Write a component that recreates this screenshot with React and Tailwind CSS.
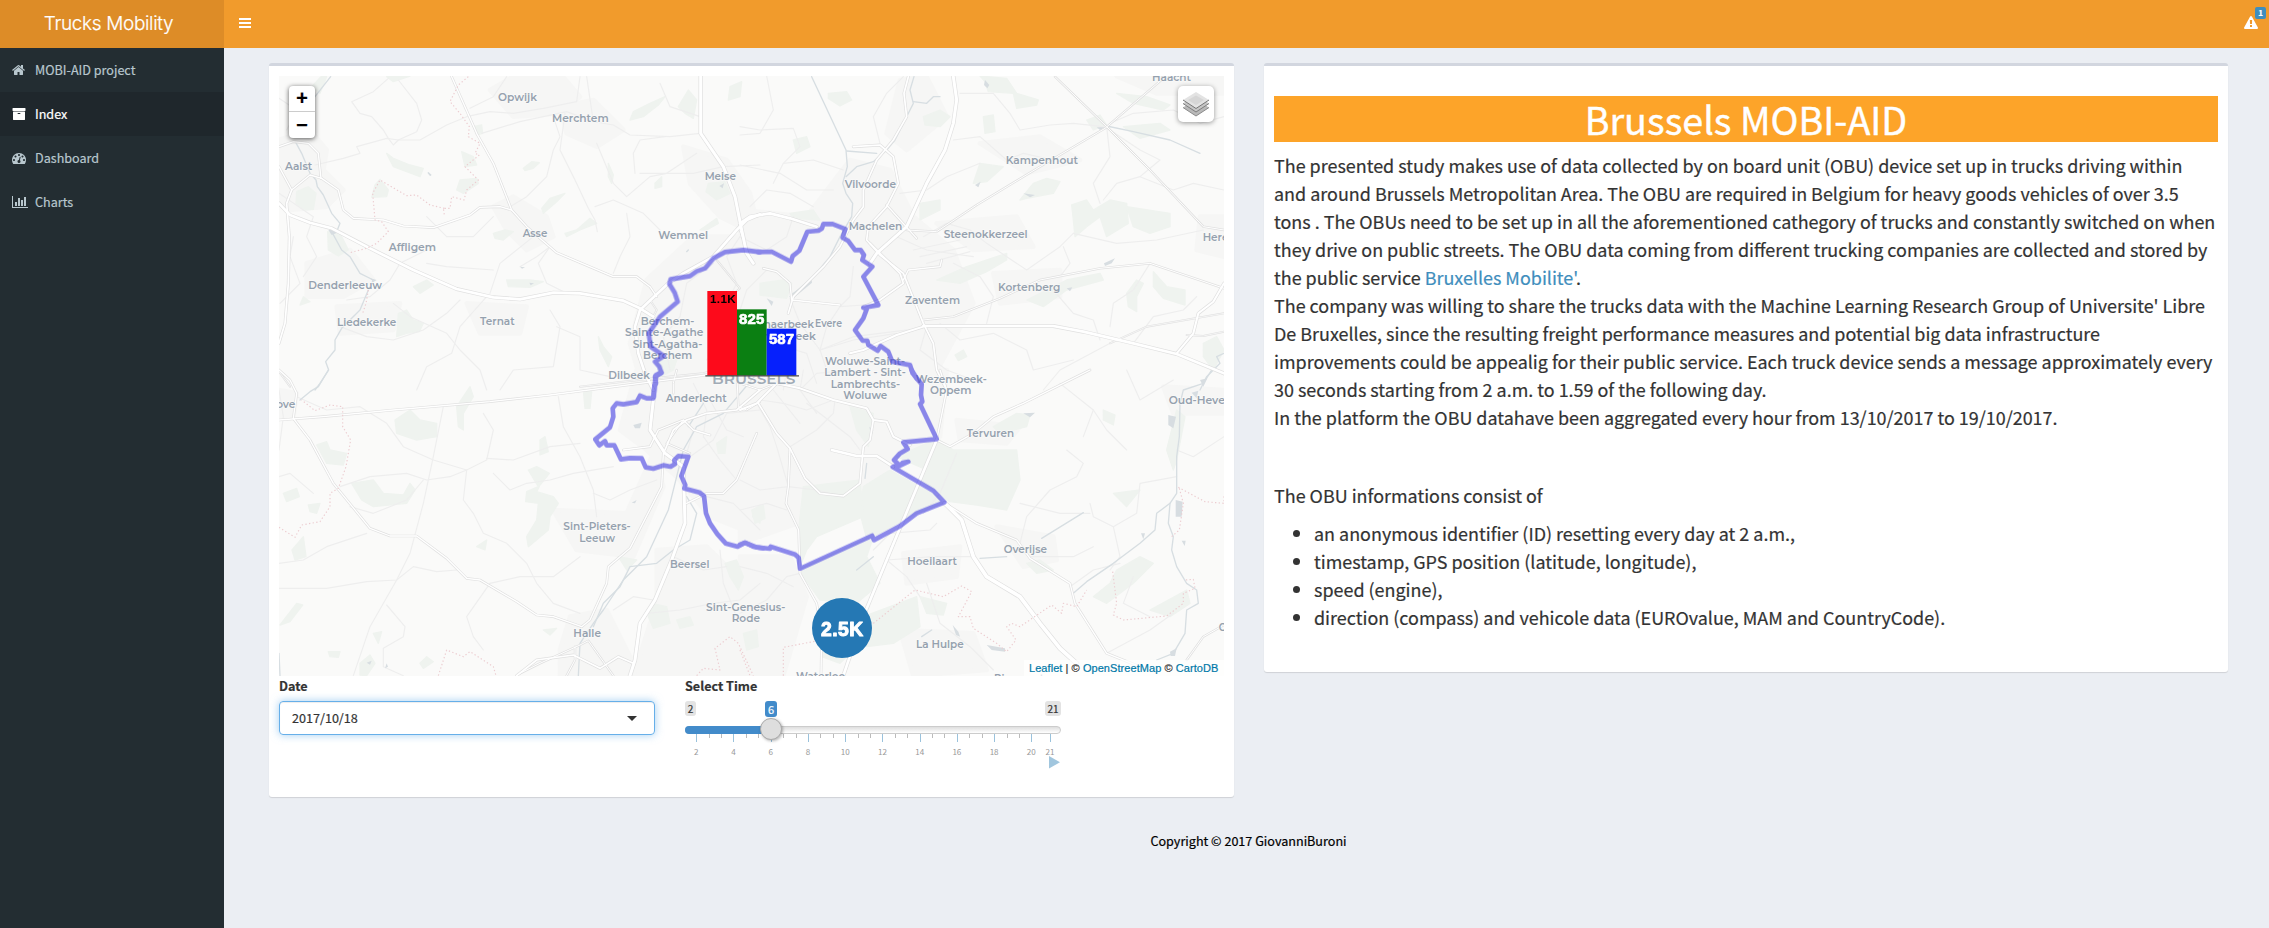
const FA = {
  home: "M1408 992v480q0 26-19 45t-45 19h-384v-384h-256v384h-384q-26 0-45-19t-19-45v-480q0-1 .5-3t.5-3l575-474 575 474q1 2 1 6zm223-69l-62 74q-8 9-21 11h-3q-13 0-21-7l-692-577-692 577q-12 8-24 7-13-2-21-11l-62-74q-8-10-7-23.5t11-21.5l719-599q32-26 76-26t76 26l244 204v-195q0-14 9-23t23-9h192q14 0 23 9t9 23v408l219 182q10 8 11 21.5t-7 23.5z",
  archive: "M1088 832q0-26-19-45t-45-19h-256q-26 0-45 19t-19 45 19 45 45 19h256q26 0 45-19t19-45zm576-192v960q0 26-19 45t-45 19h-1408q-26 0-45-19t-19-45v-960q0-26 19-45t45-19h1408q26 0 45 19t19 45zm64-448v256q0 26-19 45t-45 19h-1536q-26 0-45-19t-19-45v-256q0-26 19-45t45-19h1536q26 0 45 19t19 45z",
  dashboard: "M384 1152q0-53-37.5-90.5t-90.5-37.5-90.5 37.5-37.5 90.5 37.5 90.5 90.5 37.5 90.5-37.5 37.5-90.5zm192-448q0-53-37.5-90.5t-90.5-37.5-90.5 37.5-37.5 90.5 37.5 90.5 90.5 37.5 90.5-37.5 37.5-90.5zm428 481l101-382q6-26-7.5-48.5t-38.5-29.5-48 6.5-30 39.5l-101 382q-60 5-107 43.5t-63 98.5q-20 77 20 146t117 89 146-20 89-117q16-60-6-117t-72-91zm660-33q0-53-37.5-90.5t-90.5-37.5-90.5 37.5-37.5 90.5 37.5 90.5 90.5 37.5 90.5-37.5 37.5-90.5zm-640-640q0-53-37.5-90.5t-90.5-37.5-90.5 37.5-37.5 90.5 37.5 90.5 90.5 37.5 90.5-37.5 37.5-90.5zm448 192q0-53-37.5-90.5t-90.5-37.5-90.5 37.5-37.5 90.5 37.5 90.5 90.5 37.5 90.5-37.5 37.5-90.5zm320 448q0 261-141 483-19 29-54 29h-1402q-35 0-54-29-141-221-141-483 0-182 71-348t191-286 286-191 348-71 348 71 286 191 191 286 71 348z",
  chart: "M640 896v512h-256v-512h256zm384-512v1024h-256v-1024h256zm1024 1152v128h-2048v-1536h128v1408h1920zm-640-896v768h-256v-768h256zm384-384v1152h-256v-1152h256z",
  warning: "M1024 1375v-190q0-14-9.5-23.5t-22.5-9.5h-192q-13 0-22.5 9.5t-9.5 23.5v190q0 14 9.5 23.5t22.5 9.5h192q13 0 22.5-9.5t9.5-23.5zm-2-374l18-459q0-12-10-19-13-11-24-11h-220q-11 0-24 11-10 7-10 21l17 457q0 10 10 16.5t24 6.5h185q14 0 23.5-6.5t10.5-16.5zm-14-934l768 1408q35 63-2 126-17 29-46.5 46t-63.5 17h-1536q-34 0-63.5-17t-46.5-46q-37-63-2-126l768-1408q17-31 47-49t65-18 65 18 47 49z",
};

const MENU = [
  { label: "MOBI-AID project", icon: "home" },
  { label: "Index", icon: "archive", active: true },
  { label: "Dashboard", icon: "dashboard" },
  { label: "Charts", icon: "chart" },
];

function Icon({ name, className }) {
  return (
    <svg viewBox={name === "chart" ? "0 0 2048 1792" : "0 0 1792 1792"} className={className} fill="currentColor">
      <path d={FA[name]} />
    </svg>
  );
}

// Map geometry is stored per quadrant: north-west, north-east, south-west, south-east.
const ORIGIN = { nw: "translate(0 0)", ne: "translate(1440 0)", sw: "translate(0 960)", se: "translate(1440 960)" };

const URBAN = {
  nw: ["M57 270 L150 240 L200 300 L190 360 L250 420 L200 470 L90 480 L57 440Z", "M690 120 L760 80 L900 70 L960 140 L900 190 L760 200Z", "M900 170 L1000 150 L1090 240 L1010 290 L920 250Z", "M700 470 L760 440 L860 500 L880 560 L800 600 L740 540Z", "M140 640 L270 600 L340 690 L250 740 L140 740Z", "M1270 290 L1400 330 L1470 430 L1500 560 L1380 500 L1290 400Z", "M1160 690 L1300 560 L1500 560 L1500 1020 L1150 1020 L1110 880Z", "M620 760 L800 770 L780 850 L660 850Z", "M230 770 L420 760 L400 840 L240 850Z"],
  ne: ["M0 480 L200 500 L330 330 L450 360 L520 500 L640 600 L700 760 L560 1020 L0 1020Z", "M480 90 L560 80 L620 200 L500 300 L440 250Z", "M1130 78 L1452 78 L1452 130 L1250 130Z", "M720 280 L900 260 L1020 330 L860 370Z", "M760 670 L960 660 L960 740 L780 760Z", "M1380 500 L1452 500 L1452 620 L1370 600Z", "M590 520 L830 500 L880 590 L700 600Z"],
  sw: ["M1130 0 L1500 0 L1500 500 L1350 440 L1250 320 L1160 240 L1080 180Z", "M880 420 L1100 430 L1180 250 L1210 350 L1120 560 L950 540Z", "M930 740 L1040 720 L1120 880 L1110 917 L900 917 L900 840Z", "M1190 540 L1340 530 L1500 690 L1500 917 L1120 917 L1190 700Z", "M57 60 L110 70 L100 140 L57 140Z"],
  se: ["M0 0 L620 0 L600 200 L470 250 L370 400 L230 440 L0 520Z", "M490 550 L660 530 L650 620 L500 640Z", "M650 150 L840 170 L800 220 L660 210Z", "M0 560 L150 560 L200 680 L130 917 L0 917Z", "M770 470 L940 500 L950 570 L850 590Z", "M480 780 L700 790 L740 900 L520 917Z", "M1270 50 L1452 60 L1452 130 L1300 130Z"],
};

const GREEN = {
  nw: ["M110 425 L145 410 L168 430 L160 478 L130 480 L108 460Z", "M203 545 L240 550 L265 600 L235 618 L205 600Z", "M360 388 L385 420 L380 440 L335 442 L345 405Z", "M600 390 L650 385 L655 400 L610 430 L590 420Z", "M605 305 L640 320 L650 345 L615 350Z", "M380 310 L400 325 L450 345 L490 355 L480 380 L440 365 L400 350Z", "M415 790 L440 780 L460 810 L490 820 L478 845 L440 850 L410 860Z", "M700 550 L735 540 L760 545 L730 570 L705 565Z", "M845 475 L870 445 L915 430 L890 455 L850 490Z", "M915 550 L950 540 L990 505 L1010 520 L960 540 L920 560Z", "M790 355 L815 335 L838 338 L820 355 L795 362Z", "M1120 185 L1170 160 L1215 140 L1195 165 L1150 200 L1110 210Z", "M1255 170 L1285 120 L1310 150 L1300 205 L1275 190Z", "M1345 400 L1395 395 L1410 430 L1370 450 L1338 425Z", "M1320 540 L1370 505 L1375 520 L1340 540Z", "M740 690 L810 690 L850 695 L810 712 L745 710Z", "M460 710 L500 690 L520 705 L480 730Z", "M1045 340 L1060 375 L1055 400 L1045 380Z", "M1015 860 L1030 890 L1055 920 L1045 950 L1020 900Z", "M1190 920 L1250 930 L1240 960 L1195 985Z", "M640 230 L665 225 L668 250 L650 255Z", "M1410 110 L1445 95 L1440 140 L1405 150Z", "M155 110 L185 78 L200 80 L180 130Z", "M1185 400 L1205 380 L1205 410 L1185 415Z", "M380 80 L450 78 L400 95Z", "M130 740 L150 755 L120 765Z"],
  ne: ["M720 78 L800 85 L830 130 L895 150 L890 165 L830 175 L820 130 L745 125 L735 95Z", "M265 130 L320 125 L335 150 L300 168 L265 145Z", "M550 200 L600 180 L630 200 L600 230 L555 225Z", "M995 465 L1040 450 L1060 480 L1110 450 L1160 460 L1165 520 L1100 560 L1080 500 L1040 530 L1005 560 L1000 510Z", "M1160 470 L1290 490 L1290 530 L1230 550 L1180 530Z", "M840 450 L880 400 L920 385 L960 395 L940 430 L860 445Z", "M540 460 L600 450 L600 480 L540 510Z", "M590 690 L680 650 L800 610 L800 630 L740 665 L660 700Z", "M60 700 L130 690 L155 700 L140 745 L60 735Z", "M160 270 L200 260 L210 290 L170 310Z", "M860 750 L980 690 L1080 670 L1090 690 L980 720 L910 770Z", "M1240 665 L1280 710 L1335 720 L1335 765 L1270 745 L1240 710Z", "M1160 730 L1190 690 L1210 700 L1190 740 L1190 785 L1165 770Z", "M1150 230 L1260 220 L1290 240 L1200 265Z", "M1040 210 L1080 195 L1100 225 L1060 240Z", "M1130 130 L1220 140 L1290 165 L1270 180 L1180 160Z", "M150 490 L220 480 L240 510 L160 505Z", "M1390 880 L1430 860 L1452 900 L1420 960 L1390 920Z", "M720 340 L790 350 L740 395 L700 400Z", "M645 915 L670 900 L680 920 L655 932Z", "M730 200 L760 195 L765 245 L735 250Z"],
  sw: ["M805 300 L830 290 L868 310 L840 345 L830 365 L880 380 L895 400 L870 440 L865 480 L805 530 L800 500 L830 450 L835 400 L797 395 L800 365 L835 350Z", "M170 225 L200 215 L210 240 L260 250 L250 285 L200 280Z", "M405 150 L450 120 L480 150 L530 160 L530 200 L470 210 L410 190Z", "M590 110 L630 50 L640 80 L610 130 L610 180 L595 170Z", "M275 340 L340 330 L370 370 L430 375 L450 340 L465 360 L440 400 L340 410 L305 390Z", "M70 370 L110 355 L118 380 L80 395Z", "M145 405 L180 400 L170 430 L150 425Z", "M96 540 L130 500 L138 560 L105 570Z", "M60 765 L110 700 L128 705 L90 755Z", "M300 880 L330 855 L345 880 L320 917 L300 915Z", "M340 790 L365 785 L355 820Z", "M480 880 L500 860 L520 875 L490 895Z", "M970 60 L995 65 L990 115 L975 115Z", "M840 210 L855 200 L865 245 L840 255Z", "M1370 220 L1400 200 L1395 250 L1375 250Z", "M1480 420 L1500 405 L1500 460 L1478 440Z", "M1395 580 L1430 570 L1450 620 L1435 660 L1410 620Z", "M1175 700 L1220 710 L1230 760 L1180 775 L1165 740Z", "M1250 750 L1290 740 L1300 765 L1260 775Z", "M1450 790 L1490 780 L1495 830 L1460 840Z", "M650 530 L680 510 L675 540Z", "M205 845 L240 845 L235 862 L210 860Z", "M850 780 L890 775 L870 795Z", "M1075 560 L1130 570 L1100 600Z"],
  se: ["M370 350 L450 300 L520 340 L580 370 L610 400 L530 430 L400 500 L380 560 L420 640 L350 700 L240 690 L190 620 L180 596 L380 505 L360 430Z", "M590 205 L640 240 L830 240 L840 330 L800 420 L710 405 L630 395 L580 360 L540 330Z", "M190 350 L360 330 L370 440 L230 500 L200 540 L180 590 L176 480Z", "M760 170 L830 130 L870 135 L860 170 L780 190Z", "M35 420 L70 405 L75 445 L45 460Z", "M370 740 L530 680 L540 770 L460 820 L380 830Z", "M540 680 L620 700 L610 735 L560 730Z", "M1060 680 L1110 640 L1130 600 L1200 560 L1240 580 L1180 640 L1100 700Z", "M1230 720 L1340 660 L1350 700 L1290 740Z", "M1280 240 L1310 120 L1335 140 L1310 270 L1300 300Z", "M860 580 L900 570 L940 600 L890 610Z", "M1120 370 L1200 360 L1160 410Z", "M240 830 L330 850 L300 880 L245 860Z", "M330 110 L400 130 L385 230 L350 180Z", "M470 260 L560 220 L600 210 L560 300Z", "M1090 120 L1125 135 L1120 165 L1090 150Z"],
};

const WATER_LINES = {
  nw: ["M212 80 L165 140", "M106 275 L125 310 L150 370 L168 390 L172 410 L190 435 L215 490 L240 520 L232 540 L215 545", "M215 545 L245 600 L270 620 L300 670 L340 690 L325 720 L300 780 L245 835 L225 870 L225 900 L197 935 L206 960 L180 1000 L165 1020", "M505 368 L512 375", "M1280 605 L1285 600"],
  ne: ["M215 80 L318 300 L322 350 L308 400 L318 430 L338 460 L335 500 L300 560 L270 620 L220 680 L150 740", "M522 80 L510 120 L520 160 L495 210 L465 270 L440 300 L400 335 L350 350 L318 380", "M320 303 L410 310", "M520 155 L560 160 L580 140 L600 140", "M1100 228 L1180 245 L1290 270 L1380 310", "M1452 910 L1430 920 L1440 940 L1400 980 L1380 1020"],
  sw: ["M205 0 L175 50 L150 65 L120 90", "M1500 0 L1390 130 L1310 170 L1270 240 L1250 320 L1225 420 L1160 560 L1090 630 L1030 720 L1000 760 L960 820 L955 917", "M1280 380 L1310 430 L1290 510 L1240 540 L1190 580 L1110 590 L1080 650 L1030 700 L1000 770", "M57 850 L60 917", "M1330 100 L1285 170"],
  se: ["M1415 0 L1390 40 L1330 60 L1320 100 L1318 200 L1310 260 L1310 370 L1290 400 L1250 430 L1245 480 L1200 520 L1120 580 L1040 635 L1000 670", "M1290 400 L1285 460 L1300 500 L1295 540 L1310 590 L1340 640 L1370 660 L1375 700 L1340 720 L1335 790 L1300 850 L1250 870", "M905 505 L1030 428", "M720 565 L800 560", "M400 560 L350 600", "M545 800 L575 780", "M375 325 L380 280"],
};

const WATER_AREAS = {
  nw: ["M205 540 L225 538 L232 548 L215 555Z", "M1378 408 L1392 400 L1388 415Z", "M330 685 L350 690 L340 696Z", "M502 368 L514 374 L510 378Z", "M780 650 L795 652 L786 656Z", "M808 698 L822 700 L812 706Z"],
  ne: ["M735 90 L748 105 L742 115 L732 105Z", "M150 735 L215 690 L216 698 L160 745Z", "M1092 640 L1125 625 L1115 640 L1095 648Z", "M850 430 L885 435 L870 442Z", "M1070 232 L1095 232 L1080 240Z", "M980 715 L997 712 L990 724Z", "M705 405 L722 395 L715 412Z", "M80 745 L100 755 L95 768Z"],
  sw: ["M1120 165 L1145 158 L1140 175 L1125 175Z", "M1115 398 L1130 390 L1125 400Z", "M375 895 L380 880 L384 890Z", "M320 878 L335 872 L330 884Z"],
  se: ["M1285 135 L1308 140 L1300 175 L1285 165Z", "M1307 390 L1328 395 L1325 440 L1307 440Z", "M740 825 L795 835 L795 845 L755 840Z", "M638 765 L655 785 L660 800 L648 795Z", "M850 130 L885 128 L870 142Z", "M1290 845 L1310 835 L1305 858 L1292 858Z", "M1203 490 L1215 490 L1210 508Z", "M388 170 L400 180 L394 200Z", "M1355 68 L1375 62 L1370 85Z", "M1325 512 L1337 512 L1334 528Z", "M1380 30 L1402 25 L1390 50Z"],
};

const BORDERS = {
  nw: ["M625 80 L595 105 L570 155 L600 190 L628 230 L625 260 L660 280 L645 310 L658 315 L615 350 L655 390 L620 420 L612 450 L575 440 L570 475 L550 475 L553 495", "M553 475 L510 465 L470 435 L440 437 L360 390 L338 430 L345 510 L365 515 L385 545 L350 580 L320 595 L270 608", "M325 720 L318 760 L308 790"],
  ne: [],
  sw: ["M57 472 L105 502 L125 465 L180 455 L210 410 L210 370 L235 355 L258 290 L272 210 L248 170 L248 110 L210 105 L165 122 L125 90", "M535 917 L560 840 L610 860 L630 845 L700 890 L708 917", "M1310 917 L1330 895 L1380 900 L1365 835 L1410 800 L1435 820 L1480 917"],
  se: ["M400 760 L525 660 L610 680 L665 648 L695 665 L655 740 L690 740 L700 775 L770 820 L800 845 L828 810 L800 770 L815 760 L840 770 L935 705 L965 730 L970 700 L1010 710 L1040 660", "M1118 605 L1130 700 L1120 735 L1150 750 L1280 738 L1330 700 L1330 670 L1365 655 L1360 628 L1335 630", "M1315 352 L1395 395 L1452 400 L1452 375", "M1318 355 L1330 400 L1318 480 L1295 500", "M130 917 L130 832 L235 812", "M0 840 L30 917"],
};

const MINOR = {
  nw: ["M385 85 L340 125 L275 155 L300 190 L335 200 L370 240 L385 265 L400 285 L415 270", "M415 90 L470 160 L485 210 L470 245 L415 270 L380 265 L345 275 L290 290 L300 310 L250 325 L165 345", "M415 270 L480 270 L560 225 L620 200 L690 185 L760 190 L850 175 L950 155 L960 80", "M665 250 L780 215 L920 185 L1000 215 L1060 225 L1110 255 L1230 260 L1320 250", "M630 175 L700 140 L740 80", "M915 190 L900 300 L945 390 L985 475 L1005 510 L1012 545", "M1005 470 L1060 450 L1150 490 L1200 540", "M750 470 L800 440 L860 380 L880 300 L900 260 L880 200", "M1125 370 L1120 310 L1140 270 L1215 260", "M1140 370 L1300 370 L1390 350 L1500 345", "M820 560 L720 640 L690 730", "M870 590 L835 640 L860 700 L920 730", "M700 660 L560 650 L500 640", "M260 750 L330 740 L390 690 L420 640 L500 600", "M400 760 L450 800 L560 850 L600 900 L660 960 L680 1020", "M240 830 L320 860 L400 870 L490 840 L560 790 L600 750", "M680 740 L600 830 L575 910 L500 950 L470 1020", "M720 1020 L760 960 L880 950 L900 830 L870 780", "M890 830 L960 860 L960 960 L1050 980", "M57 430 L160 500 L140 560 L170 620 L130 680", "M100 560 L90 620 L120 700 L60 760", "M1000 215 L980 80", "M1100 490 L1110 560 L1080 620 L1060 670", "M1200 100 L1230 170 L1320 200", "M1010 280 L1060 400 L1100 440 L1170 380 L1220 370 L1310 310", "M780 650 L830 620 L870 590", "M500 500 L560 560 L640 560 L700 500", "M57 145 L110 180 L80 240", "M1440 560 L1400 620 L1430 700 L1390 780 L1400 860 L1340 930", "M1360 640 L1280 700 L1260 800 L1210 860 L1230 960"],
  ne: ["M80 78 L100 180 L60 250 L0 255", "M0 230 L60 240 L160 235 L180 290 L130 340 L100 400", "M130 340 L220 330 L310 360", "M0 345 L120 370 L200 420 L280 420", "M490 80 L440 130 L400 200 L420 280", "M640 270 L720 260 L800 330 L850 310 L940 330", "M660 130 L760 130 L810 190 L840 240 L930 225 L1000 220 L1090 230", "M1100 230 L1110 320 L1060 400 L1080 460", "M1110 220 L1180 190 L1300 180 L1380 220 L1452 200", "M1110 240 L1200 300 L1260 330 L1200 380 L1130 400 L1090 450", "M550 560 L620 520 L690 540 L740 580 L860 660 L960 590 L1000 550", "M480 430 L560 420 L620 380 L720 340", "M1000 550 L1130 580 L1250 570 L1390 540", "M960 680 L990 640 L970 590", "M1230 640 L1180 720 L1120 760 L1110 830", "M940 720 L1000 790 L1060 810 L1080 870", "M740 820 L760 740 L720 680 L640 640", "M600 820 L660 870 L760 850 L860 900 L880 960 L1000 930", "M560 830 L540 900 L620 960 L700 990", "M0 560 L80 600 L140 560 L160 500", "M80 660 L20 720 L0 780", "M150 745 L180 820 L240 900 L260 960", "M240 900 L340 870 L470 850", "M240 900 L340 860 L540 835", "M0 900 L100 880 L200 910 L230 1000", "M100 880 L140 960 L130 1020", "M180 1020 L230 970 L330 960", "M300 770 L260 830 L240 900", "M340 650 L330 740 L300 770 L370 765", "M30 470 L80 420 L150 430 L220 470", "M1200 380 L1300 420 L1360 400 L1452 420", "M1180 880 L1240 800 L1330 780 L1370 740", "M1110 880 L960 960 L910 1020", "M470 560 L560 600 L700 620", "M520 600 L660 570 M540 620 L680 590 M560 640 L690 605"],
  sw: ["M110 80 L200 120 L300 110 L380 160 L430 230 L520 270 L620 300 L680 270 L700 180 L670 130", "M680 265 L760 270 L870 230 L960 220", "M550 110 L520 260 L490 400 L450 550 L410 630 L330 770 L280 917", "M240 350 L330 320 L440 310 L500 330 L570 320 L620 300 L610 390 L640 430 L670 490 L740 520 L800 580 L830 640 L880 700 L960 730", "M57 580 L130 570 L200 530 L320 490", "M57 655 L200 655 L320 635 L410 630 L460 590 L530 605 L590 600", "M380 705 L435 770 L430 800 L370 835 L370 890 L430 917", "M690 640 L620 740 L640 800 L670 840", "M690 640 L780 620 L880 620 L960 560", "M895 80 L910 170 L960 260 L1000 360 L1010 440", "M700 310 L750 360 L800 340 L870 330 L940 310 L1060 290", "M1000 370 L1050 390 L1110 360 L1190 330", "M1300 40 L1340 120 L1330 200 L1380 270 L1430 330", "M1500 120 L1400 130 L1360 210 L1290 260", "M1340 380 L1420 400 L1500 480", "M1380 540 L1390 640 L1430 740", "M1180 690 L1120 680 L1060 720", "M1240 560 L1330 600 L1400 590", "M1500 640 L1440 690 L1360 700 L1260 720 L1160 730", "M1300 180 L1280 250 M1350 90 L1400 180 L1450 200", "M57 60 L70 140 L57 240", "M160 370 L90 310 L57 320", "M270 410 L340 430 L440 390 L490 330"],
  se: ["M50 100 L90 170 L110 230 L145 350", "M50 190 L0 310", "M150 230 L230 180 L280 130 L285 90", "M60 90 L130 100 L200 120 L280 90", "M190 0 L180 60 L230 130 M100 60 L180 160", "M145 350 L230 360 L310 380", "M145 350 L60 360 L0 330", "M200 100 L330 200 L360 240", "M0 420 L80 400 L140 420", "M0 590 L80 610 L160 650", "M180 610 L140 620 L80 690 L0 730", "M440 570 L500 620 L540 680", "M400 540 L450 490 L570 480 L590 460", "M650 250 L600 370 L550 430", "M700 560 L580 560 L440 570", "M840 520 L860 440 L930 360 L1010 320 L1030 280 L980 240", "M1060 120 L1100 180 L1160 240", "M960 40 L1060 120 L1030 200", "M1050 400 L1060 440 L1120 470 L1190 430 L1200 340 L1310 320", "M1050 430 L960 430 L840 400", "M1120 470 L1140 560 L1110 600", "M990 650 L1060 600 L1140 580", "M870 560 L1000 560 L1060 530", "M560 640 L600 760 L690 830 L760 900", "M250 730 L400 760", "M1100 850 L1230 780 L1300 730", "M1180 620 L1150 700 L1230 740", "M1452 200 L1360 260 L1310 240", "M1300 30 L1200 90 L1160 0"],
};

const MAJOR = {
  nw: [
    [12, "M57 460 L90 495 L150 518 L215 535 L330 595 L460 660 L590 717 L700 742 L780 748 L880 728 L960 730 L1090 752 L1140 775 L1180 800"],
    [8, "M57 290 L100 275 L145 280 L175 310 L183 385"],
    [8, "M57 350 L95 420 L150 375 L185 385 L235 420 L250 480 L280 505 L370 510 L430 528 L520 533 L630 495 L660 472 L720 470 L755 480"],
    [9, "M95 420 L80 460 L88 560 L85 700 L75 820 L57 880"],
    [8, "M575 80 L650 250 L700 340 L755 480 L800 530 L890 608 L1060 680 L1130 680 L1170 710 L1190 740"],
    [13, "M1322 80 L1322 250 L1390 350 L1425 440 L1445 540 L1460 610 L1480 640"],
    [12, "M1500 493 L1460 510 L1430 540 L1360 620 L1270 670 L1225 700 L1140 780 L1125 830 L1135 910 L1155 970 L1180 1020"],
    [6, "M57 965 L90 1010 M960 1010 L1180 985 L1330 970 L1440 940"],
    [6, "M1370 630 L1440 715 L1400 750 M1170 750 L1190 780 L1180 800"],
  ],
  ne: [
    [12, "M0 520 L30 500 L90 490 L150 505 L230 530"],
    [13, "M640 80 L650 150 L640 220 L615 300 L560 400 L500 530 L410 610 L390 640"],
    [9, "M505 80 L492 130 L500 200 L460 270 L410 330 L370 420 L370 470 L340 510 L300 590 L250 650 L160 740 L145 790"],
    [9, "M340 290 L420 285 L460 320 L475 400 L440 470 L385 530 L380 570 L420 615 L490 670 L550 820 L580 880 L590 960 L620 1020"],
    [9, "M390 580 L420 610 L480 670 L490 700 L420 750 L370 770"],
    [8, "M490 690 L505 660 L600 650 L605 630 M440 465 L530 565"],
    [7, "M945 80 L1100 230 L1230 360 L1390 530 L1452 540"],
    [7, "M1270 85 L1095 235 L900 350 L710 465 L590 545 L500 540"],
    [7, "M550 810 L640 800 L780 745 L900 690 L1080 655 L1230 640 L1452 715"],
    [12, "M550 828 L940 828 L1030 845 L1180 880 L1310 912 L1452 970"],
    [10, "M1452 700 L1420 755 L1375 790 L1360 850 L1310 910"],
    [10, "M550 830 L470 855 L370 900 L330 910"],
    [8, "M70 655 L110 665 L150 700 L155 750 L300 765"],
    [6, "M1110 880 L1220 830 L1452 790 M1340 855 L1390 858 L1452 845"],
    [7, "M0 540 L20 600 L40 640"],
  ],
  sw: [
    [8, "M57 150 L190 140 L400 120 L690 95 L870 75 L1180 35 L1340 15"],
    [8, "M57 0 L90 30 L110 70 L100 145 L150 210 L220 340 L330 475 L390 498 L470 498 L560 565 L620 625 L660 630 L770 695 L830 735 L880 740 L965 770"],
    [13, "M1180 90 L1170 180 L1215 250 L1270 290 L1275 460 L1235 570 L1185 690 L1140 760 L1125 870 L1110 917"],
    [8, "M1210 250 L1205 350 L1110 535 L1045 590 L1040 640 L990 750 L965 770"],
    [9, "M1215 240 L1240 180 L1280 150 L1340 130 L1430 120 L1500 60"],
    [8, "M1090 240 L1170 230 L1195 180 L1270 150 L1300 180 L1350 195"],
    [7, "M1270 150 L1220 220 L1290 250 M1430 0 L1435 110 L1460 120 L1500 95"],
    [8, "M1280 400 L1340 370 L1390 370 L1430 330 L1490 190"],
    [9, "M770 917 L830 870 L940 855 L1020 895 L1075 860 L1120 880"],
    [7, "M780 910 L840 880 L960 825 L985 812 L1060 917 M945 830 L945 870 L920 917"],
    [7, "M1250 0 L1240 40 L1240 70"],
  ],
  se: [
    [10, "M0 120 L50 100 L110 40 L180 55 L280 90 L380 115 L400 150 L440 155 L460 200 L510 225"],
    [9, "M55 100 L110 190 L150 235 L195 325 L240 370 L310 378 L360 340 L370 230 L390 210 L400 150"],
    [11, "M275 240 L350 258 L410 258 L460 290"],
    [15, "M615 400 L665 450 L700 560 L740 620 L840 680 L900 760 L960 835 L1010 880"],
    [12, "M590 210 L540 330 L440 570 L370 740 L310 917"],
    [8, "M600 0 L620 60 L600 160 L590 210 L630 230 L700 190 L760 140 L850 100 L1050 0"],
    [8, "M150 235 L145 350 L138 400 L176 480 L180 610 L230 700 L245 790 L243 917"],
    [8, "M615 400 L710 460 L830 510 L870 565 L990 640 L1005 700 L1100 850 L1200 890"],
    [7, "M1452 765 L1390 800 L1340 870 M0 40 L60 60 L110 40"],
  ],
};

const REGION = {
  nw: "M1181 1040 L1185 1000 L1188 975 L1204 968 L1198 950 L1185 935 L1212 918 L1172 890 L1166 850 L1200 800 L1253 755 L1244 728 L1228 702 L1232 688 L1290 678 L1310 664 L1335 655 L1360 625 L1395 606 L1450 600 L1500 606",
  ne: "M55 606 L95 605 L153 635 L158 618 L178 602 L202 545 L235 542 L246 535 L250 522 L278 522 L316 537 L308 563 L325 573 L345 600 L362 600 L372 615 L367 630 L397 650 L370 680 L415 765 L370 773 L380 778 L370 805 L345 840 L368 872 L382 872 L385 885 L413 902 L422 888 L445 905 L457 935 L510 945 L518 970 L530 985",
  sw: "M1510 535 L1480 530 L1455 518 L1433 530 L1397 520 L1372 492 L1350 460 L1338 430 L1332 378 L1318 367 L1273 355 L1276 345 L1264 318 L1285 260 L1255 258 L1243 270 L1245 282 L1232 290 L1210 286 L1180 296 L1157 292 L1145 265 L1110 264 L1083 268 L1063 226 L1040 226 L1035 213 L1018 226 L1006 208 L1050 172 L1060 140 L1058 115 L1070 100 L1090 103 L1130 96 L1140 77 L1160 85 L1180 85 L1183 48 L1188 40 L1185 20 L1204 8",
  se: "M515 0 L530 25 L545 42 L543 75 L547 95 L540 102 L590 207 L490 217 L503 237 L480 250 L462 270 L480 287 L488 278 L505 275 L480 287 L470 286 L458 291 L580 362 L613 397 L530 430 L480 468 L402 510 L396 497 L180 596 L176 563 L165 553 L92 530 L90 536 L50 532 L15 518 L0 524",
};

// [text, x, baseline, width]
const LABELS = [
  ["Opwijk", 714, 152, 117], ["Merchtem", 876, 216, 170], ["Aalst", 75, 361, 82], ["Meise", 1334, 390, 94],
  ["Asse", 788, 560, 74], ["Wemmel", 1195, 566, 149], ["Affligem", 386, 604, 142], ["Denderleeuw", 145, 716, 221],
  ["Liedekerke", 231, 827, 178], ["Ternat", 660, 825, 104], ["Berchem-", 1142, 824, 161], ["Sainte-Agathe", 1095, 859, 235],
  ["Sint-Agatha-", 1118, 893, 209], ["Berchem", 1149, 927, 148], ["Dilbeek", 1045, 987, 125],
  ["Haacht", 2676, 93, 117], ["Kampenhout", 2237, 341, 217], ["Vilvoorde", 1754, 414, 154], ["Machelen", 1766, 540, 161],
  ["Steenokkerzeel", 2051, 563, 252], ["Herent", 2828, 572, 112], ["Kortenberg", 2214, 722, 187], ["Zaventem", 1935, 762, 165],
  ["Schaerbeek", 1474, 835, 188], ["Evere", 1665, 830, 81], ["Schaarbeek", 1470, 869, 198], ["Woluwe-Saint-", 1695, 945, 240],
  ["Lambert - Sint-", 1693, 979, 244], ["Lambrechts-", 1712, 1013, 208], ["Woluwe", 1750, 1047, 132],
  ["Wezembeek-", 1967, 998, 213], ["Oppem", 2010, 1032, 124], ["Oud-Heverlee", 2726, 1062, 232],
  ["Ninove", -8, 1073, 114], ["Anderlecht", 1217, 1055, 183], ["Sint-Pieters-", 910, 1440, 202], ["Leeuw", 958, 1475, 107],
  ["Beersel", 1230, 1553, 118], ["Sint-Genesius-", 1338, 1682, 238], ["Rode", 1415, 1716, 85], ["Halle", 940, 1761, 83],
  ["Tervuren", 2120, 1160, 142], ["Overijse", 2231, 1510, 130], ["Hoeilaart", 1942, 1544, 149], ["La Hulpe", 1968, 1793, 143],
  ["Waterloo", 1608, 1889, 148], ["Rixensart", 2202, 1895, 150], ["Corbais", 2876, 1743, 110],
];

const QUADS = ["nw", "ne", "sw", "se"];

function Quads({ data, ...rest }) {
  return (
    <g {...rest}>
      {QUADS.map((q) => (
        <g key={q} transform={ORIGIN[q]}>{[].concat(data[q]).map((d) => <path key={d} d={d} />)}</g>
      ))}
    </g>
  );
}

function BaseMap() {
  return (
    <svg viewBox="57 78 2835 1800" className="block h-[600px] w-[945px]" strokeLinejoin="round" strokeLinecap="round">
      <rect x="57" y="78" width="2835" height="1800" fill="#fafaf9" />
      <Quads data={URBAN} fill="#f6f6f5" stroke="#f6f6f5" strokeWidth="14" />
      <Quads data={GREEN} fill="#eff3ef" stroke="#eff3ef" strokeWidth="4" />
      <Quads data={MINOR} fill="none" stroke="#eeeeee" strokeWidth="3.5" />
      <Quads data={WATER_LINES} fill="none" stroke="#d7dee2" strokeWidth="4" />
      <Quads data={WATER_AREAS} fill="#d7dde1" />
      <g fill="none">
        {QUADS.map((q) => (
          <g key={q} transform={ORIGIN[q]} stroke="#e0e0e0">
            {MAJOR[q].map(([w, d]) => <path key={d} d={d} strokeWidth={w} />)}
          </g>
        ))}
        {QUADS.map((q) => (
          <g key={q} transform={ORIGIN[q]} stroke="#ffffff">
            {MAJOR[q].map(([w, d]) => <path key={d} d={d} strokeWidth={w - 4} />)}
          </g>
        ))}
      </g>
      <Quads data={BORDERS} fill="none" stroke="#ecccd0" strokeWidth="3.5" strokeDasharray="4 7" strokeLinecap="butt" />
      <g fontFamily="Montserrat, Inter, sans-serif" fontWeight="600" fontSize="32.5" fill="#95a1ae" stroke="#fafaf9" strokeWidth="4" paintOrder="stroke">
        {LABELS.map(([t, x, y, w]) => (
          <text key={t + y} x={x} y={y} textLength={w} lengthAdjust="spacingAndGlyphs">{t}</text>
        ))}
        <text x="1356" y="1002" fontSize="43" textLength="250" lengthAdjust="spacingAndGlyphs" fill="#a1abb6">BRUSSELS</text>
      </g>
      <Quads data={REGION} fill="none" stroke="#3a34e0" strokeWidth="14" opacity="0.58" />
      <g fontFamily="'Liberation Sans', Arial, sans-serif" fontWeight="700">
        <rect x="1342" y="723" width="89" height="254" fill="#fd0a1b" />
        <rect x="1431" y="778" width="89" height="199" fill="#0b7f12" />
        <rect x="1520" y="836" width="89" height="141" fill="#0620fc" />
        <path d="M1336 977.5 H1617" stroke="#4a4a4a" strokeWidth="4" strokeLinecap="butt" />
        <text x="1350" y="760" fontSize="35" textLength="77" fill="#000">1.1K</text>
        <g fill="#fff" stroke="#fff" strokeWidth="2">
          <text x="1437" y="822" fontSize="45" textLength="76">825</text>
          <text x="1527" y="881" fontSize="45" textLength="75">587</text>
        </g>
        <circle cx="1746" cy="1734" r="90" fill="#2578b4" />
        <text x="1683" y="1757" fontSize="58" textLength="127" fill="#fff" stroke="#fff" strokeWidth="3">2.5K</text>
      </g>
    </svg>
  );
}

function LayersIcon() {
  return (
    <svg viewBox="0 0 26 26" className="size-[26px]">
      <path d="M0 16.5 L13 8 L26 16.5 L13 25Z" fill="#b9b9b9" />
      <path d="M0 16.5 L13 25 L26 16.5" fill="none" stroke="#8a8a8a" />
      <path d="M0 12.5 L13 4 L26 12.5 L13 21Z" fill="#c6c6c6" />
      <path d="M0 12.5 L13 21 L26 12.5" fill="none" stroke="#7d7d7d" />
      <path d="M0 9 L13 1 L26 9 L13 17.5Z" fill="#e3e3e3" />
      <path d="M5 9 L13 4.5 L21 9 L13 14Z" fill="#d6d6d6" />
      <path d="M0 9 L13 17.5 L26 9" fill="none" stroke="#777" />
    </svg>
  );
}

function Slider() {
  const major = [2, 4, 6, 8, 10, 12, 14, 16, 18, 20, 21];
  const at = (v) => 11.2 + (v - 2) * 18.62;
  const minor = [];
  for (let v = 2; v < 20; v += 2) minor.push(at(v + 2 / 3), at(v + 4 / 3));
  return (
    <div className="relative h-[67px] w-[376px]">
      <div className="flex justify-between text-[10px] leading-[15px] text-[#333]">
        <span className="h-[15px] w-[11px] rounded-[3px] bg-[#e3e3e3] text-center">2</span>
        <span className="h-[15px] w-4 rounded-[3px] bg-[#e3e3e3] text-center">21</span>
      </div>
      <span className="absolute top-0 left-[80px] h-4 w-3 rounded-[3px] bg-[#428bca] text-center text-[11px] leading-4 text-white">6</span>
      <div className="mt-[10px] h-2 rounded-full border border-[#ccc] bg-linear-to-b from-[#dedede] to-white" />
      <div className="absolute top-[25px] left-0 h-2 w-[86px] rounded-l-full bg-[#428bca]" />
      <svg viewBox="0 0 376 34" className="block h-[34px] w-[376px] overflow-visible">
        {major.map((v) => <rect key={v} x={Math.round(at(v))} y="0" width="1" height="8" fill="#9ac2dc" />)}
        {minor.map((x) => <rect key={x} x={Math.round(x)} y="0" width="1" height="4" fill="#bbb" />)}
        {major.map((v) => (
          <text key={v} x={at(v)} y="21" fontSize="8.1" textAnchor="middle" fill="#999">{v}</text>
        ))}
        <path d="M364 22 L375 28.2 L364 34.5Z" fill="#a1c6de" />
      </svg>
      <div className="absolute top-[17px] left-[75px] size-[22px] rounded-full border border-[#aaa] bg-[#dedede] shadow-[1px_1px_3px_rgba(0,0,0,0.3)]" />
    </div>
  );
}

const CARD = "rounded-[3px] border-t-[3px] border-[#d2d6df] bg-white px-[10px] shadow-[0_1px_1px_rgba(0,0,0,0.12)]";

export default function App() {
  return (
    <div className="flex h-[928px] w-[2269px] flex-col overflow-hidden bg-[#ebeef3] font-['Source_Sans_Pro','Noto_Sans_CJK_SC',sans-serif] text-[12.6px] leading-5 text-[#333] [-webkit-text-stroke:0.2px]">
      <header className="flex h-12 shrink-0 bg-[#f19b2c] text-white">
        <div className="flex w-[224px] items-center justify-center bg-[#dd8c27] pr-[7px] pb-px font-['Helvetica_Neue','Inter',sans-serif] text-[19px] font-light tracking-[-0.35px]">
          Trucks Mobility
        </div>
        <div className="flex flex-1 items-center justify-between pr-[11px] pl-[15px]">
          <div className="flex w-3 flex-col gap-[2px] pb-[2px]">
            <i className="h-[2px] bg-white" />
            <i className="h-[2px] bg-white" />
            <i className="h-[2px] bg-white" />
          </div>
          <div className="relative pb-[2px]">
            <Icon name="warning" className="size-[14px]" />
            <span className="absolute -top-[9px] left-[11px] h-3 w-[11px] rounded-[2px] bg-[#3f8ebd] text-center text-[8px] leading-3 font-bold">1</span>
          </div>
        </div>
      </header>
      <div className="flex flex-1">
        <nav className="w-[224px] shrink-0 bg-[#232d32]">
          {MENU.map(({ label, icon, active }) => (
            <a key={label} className={active ? "flex h-11 items-center bg-[#1f272c] pl-3 text-white" : "flex h-11 items-center pl-3 text-[#b8c7ce]"}>
              <span className="flex w-[23px]">
                <Icon name={icon} className={icon === "chart" ? "h-[14px] w-4" : "size-[14px]"} />
              </span>
              <span>{label}</span>
            </a>
          ))}
        </nav>
        <main className="flex flex-1 flex-col">
          <div className="flex items-start gap-[30px] pt-[15px] pl-[45px]">
            <section className={`${CARD} h-[734px] w-[965px] pt-[10px]`}>
              <div className="relative h-[600px] overflow-hidden">
                <BaseMap />
                <div className="absolute top-[10px] left-[10px] w-[26px] rounded-[4px] bg-white font-['Liberation_Mono',monospace] text-[20px] font-bold text-black shadow-[0_1px_5px_rgba(0,0,0,0.65)]">
                  <div className="flex h-[26px] items-center justify-center border-b border-[#ccc] pt-[3px]">+</div>
                  <div className="flex h-[26px] items-center justify-center pt-[3px]">−</div>
                </div>
                <div className="absolute top-[10px] right-[10px] flex size-9 items-center justify-center rounded-[5px] bg-white shadow-[0_1px_5px_rgba(0,0,0,0.4)]">
                  <LayersIcon />
                </div>
                <div className="absolute right-0 bottom-0 h-4 w-[200px] bg-white/70 pl-[5px] font-['Liberation_Sans',sans-serif] text-[11px] leading-4 tracking-[0.06px] whitespace-nowrap text-[#333]">
                  <span className="text-[#0078a8]">Leaflet</span> | © <span className="text-[#0078a8]">OpenStreetMap</span> © <span className="text-[#0078a8]">CartoDB</span>
                </div>
              </div>
              <div className="flex gap-[30px]">
                <div className="w-[376px]">
                  <div className="h-[25px] font-bold">Date</div>
                  <div className="flex h-[34px] items-center justify-between rounded-[4px] border border-[#66afe9] pr-[17px] pl-3 shadow-[inset_0_1px_1px_rgba(0,0,0,0.075),0_0_8px_rgba(102,175,233,0.6)]">
                    <span>2017/10/18</span>
                    <svg viewBox="0 0 10 5" className="h-[5px] w-[10px]"><path d="M0 0H10L5 5Z" fill="#333" /></svg>
                  </div>
                </div>
                <div>
                  <div className="h-[25px] font-bold">Select Time</div>
                  <Slider />
                </div>
              </div>
            </section>
            <section className={`${CARD} h-[609px] w-[964px] pt-[30px] text-[17.96px] leading-7`}>
              <h1 className="h-[46px] bg-[#fda429] text-center text-[37.7px] leading-[45px] text-white [-webkit-text-stroke:0.4px]">Brussels MOBI-AID</h1>
              <p className="mt-[9px] whitespace-nowrap">
                The presented study makes use of data collected by on board unit (OBU) device set up in trucks driving within<br />
                and around Brussels Metropolitan Area. The OBU are required in Belgium for heavy goods vehicles of over 3.5<br />
                tons . The OBUs need to be set up in all the aforementioned cathegory of trucks and constantly switched on when<br />
                they drive on public streets. The OBU data coming from different trucking companies are collected and stored by<br />
                the public service <a className="text-[#3f8ebd]">Bruxelles Mobilite'</a>.<br />
                The company was willing to share the trucks data with the Machine Learning Research Group of Universite' Libre<br />
                De Bruxelles, since the resulting freight performance measures and potential big data infrastructure<br />
                improvements could be appealig for their public service. Each truck device sends a message approximately every<br />
                30 seconds starting from 2 a.m. to 1.59 of the following day.<br />
                In the platform the OBU datahave been aggregated every hour from 13/10/2017 to 19/10/2017.
              </p>
              <p className="mt-[50px]">The OBU informations consist of</p>
              <ul className="mt-[10px] list-disc pl-10">
                <li>an anonymous identifier (ID) resetting every day at 2 a.m.,</li>
                <li>timestamp, GPS position (latitude, longitude),</li>
                <li>speed (engine),</li>
                <li>direction (compass) and vehicole data (EUROvalue, MAM and CountryCode).</li>
              </ul>
            </section>
          </div>
          <footer className="mt-[34px] pl-1 text-center text-black">Copyright © 2017 GiovanniBuroni</footer>
        </main>
      </div>
    </div>
  );
}
